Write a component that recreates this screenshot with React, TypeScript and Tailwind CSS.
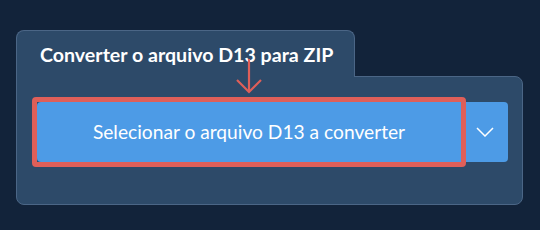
export default function App() {
  return (
    <div className="w-[540px] h-[230px] bg-[#12233a] pt-[30px] pl-4 font-['Lato',sans-serif]">
      <div className="w-[507px]">
        {/* Tab */}
        <div className="relative z-10 -mb-px w-[339px] h-[47px] rounded-t-lg border border-b-0 border-[#4b6686] bg-[#2d4a69] pl-[23px] pt-[12px]">
          <h1 className="text-[19.6px] font-bold leading-[24px] text-white">
            Converter o arquivo D13 para ZIP
          </h1>
        </div>

        {/* Panel */}
        <div className="rounded-b-lg rounded-tr-lg border border-[#4b6686] bg-[#2d4a69] pl-5 pr-[14px] pt-[25px] pb-[42px]">
          <div className="flex h-[60px]">
            <div className="relative flex-1">
              <button className="h-full w-full rounded-l bg-[#4d9be6] text-[19.2px] text-white">
                Selecionar o arquivo D13 a converter
              </button>
              <div className="pointer-events-none absolute -inset-[5px] rounded-[4px] border-[5px] border-[#df5f59]" />
              <svg
                className="absolute z-20 left-[199px] top-[-44px]"
                width="26"
                height="36"
                viewBox="0 0 26 36"
                fill="none"
                stroke="#df5f59"
                strokeWidth="2.2"
              >
                <path d="M13 1 V34" />
                <path d="M1 22 L13 34 L25 22" />
              </svg>
            </div>
            <button className="flex w-[47px] items-center justify-center rounded-r bg-[#4d9be6] text-white">
              <svg width="18" height="10" viewBox="0 0 18 10" fill="none" stroke="currentColor" strokeWidth="1.5">
                <path d="M1 1 L9 9 L17 1" />
              </svg>
            </button>
          </div>
        </div>
      </div>
    </div>
  );
}
